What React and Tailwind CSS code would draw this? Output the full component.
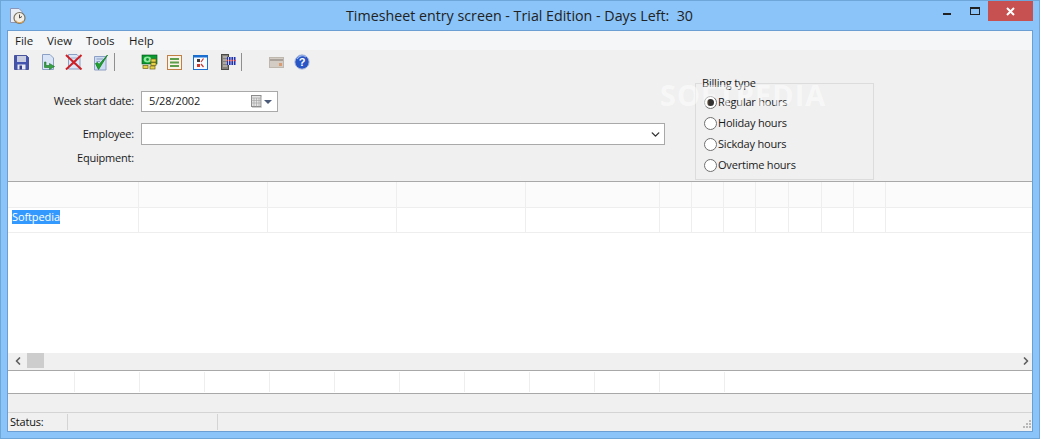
import { ChevronDown, ChevronLeft, ChevronRight } from 'lucide-react'

const gridCols = ['w-[131px]', 'w-[129px]', 'w-[129px]', 'w-[129px]', 'w-[134px]', 'w-[32px]', 'w-[32px]', 'w-[32px]', 'w-[33px]', 'w-[33px]', 'w-[32px]', 'w-[32px]']
const footCols = [67, 65, 65, 65, 65, 65, 65, 65, 65, 65, 65]

function AppIcon() {
  return (
    <svg width="18" height="18" viewBox="0 0 18 18" aria-hidden="true">
      <path d="M1.5 1.5H10L13 4.5V15.5H1.5Z" fill="#e8edf6" stroke="#8b97b8" />
      <circle cx="10.5" cy="11" r="5.5" fill="#f3efe6" stroke="#77705f" strokeWidth="1.2" />
      <path d="M10.5 11V7.5M10.5 11L13 9.5" stroke="#4c4c4c" strokeWidth="1" />
      <path d="M6.5 13.5A5 5 0 0 0 14.5 14" stroke="#d9a45b" strokeWidth="1.2" fill="none" />
    </svg>
  )
}

function SaveIcon() {
  return (
    <svg width="15" height="15" viewBox="0 0 15 15" aria-hidden="true">
      <path d="M.5 .5H12.5L14.5 2.5V14.5H.5Z" fill="#4254ad" stroke="#333f8e" strokeWidth="0.8" />
      <rect x="3" y="1" width="9" height="6" fill="#c9cde0" />
      <rect x="3.5" y="9.5" width="8" height="5" fill="#e9ebf3" />
      <rect x="5.5" y="10.5" width="2.5" height="4" fill="#333f8e" />
    </svg>
  )
}

function OpenIcon() {
  return (
    <svg width="15" height="16" viewBox="0 0 15 16" aria-hidden="true">
      <path d="M1.5 .5H9L12.5 4V15.5H1.5Z" fill="#d9e5f6" stroke="#8ba0c4" />
      <path d="M5 8V11.5H8.5V9.5L13.5 12.5L8.5 15.5V13.5H3.5V8Z" fill="#35a142" stroke="#1c6e2a" strokeWidth="0.6" />
    </svg>
  )
}

function DeleteIcon() {
  return (
    <svg width="18" height="16" viewBox="0 0 18 16" aria-hidden="true">
      <path d="M3.5 .5H12L15 3.5V15H3.5Z" fill="#dbe6f6" stroke="#8ba0c4" />
      <path d="M6 4H12M6 7H12M6 10H12" stroke="#9fb0cc" />
      <path d="M1 1L16.5 15.5M16.5 1L1 15.5" stroke="#cf1f24" strokeWidth="2" />
    </svg>
  )
}

function CheckIcon() {
  return (
    <svg width="15" height="17" viewBox="0 0 15 17" aria-hidden="true">
      <path d="M1.5 2.5H13V16H1.5Z" fill="#cddcf2" stroke="#8ba0c4" />
      <path d="M3.5 5H10M3.5 7.5H7" stroke="#8ba0c4" />
      <path d="M2.5 9.5L5.5 15.5L14.5 1L6 10.5L4.5 8.5Z" fill="#1fa52e" stroke="#0f7c1e" strokeWidth="0.8" />
    </svg>
  )
}

function MoneyIcon() {
  return (
    <svg width="17" height="16" viewBox="0 0 17 16" aria-hidden="true">
      <rect x="1" y="1" width="15" height="9" fill="#0a9a30" stroke="#06501a" strokeWidth="0.6" />
      <ellipse cx="6.5" cy="5.5" rx="3.8" ry="3" fill="#8fe89e" />
      <circle cx="6.5" cy="5.5" r="1.4" fill="#0a9a30" />
      <rect x="10" y="5" width="5" height="3" fill="#e7d34a" stroke="#6f6110" strokeWidth="0.7" />
      <rect x="10" y="8.5" width="5" height="3" fill="#e7d34a" stroke="#6f6110" strokeWidth="0.7" />
      <rect x="2" y="11.5" width="5" height="3" fill="#e7d34a" stroke="#6f6110" strokeWidth="0.7" />
      <rect x="9" y="12" width="5" height="3" fill="#e7d34a" stroke="#6f6110" strokeWidth="0.7" />
    </svg>
  )
}

function ListIcon() {
  return (
    <svg width="15" height="15" viewBox="0 0 15 15" aria-hidden="true">
      <rect x=".5" y=".5" width="14" height="14" fill="#fbf3e8" stroke="#c07f45" />
      <rect x="3" y="3" width="9" height="2" fill="#5d9e4a" />
      <rect x="3" y="6.5" width="9" height="2" fill="#5d9e4a" />
      <rect x="3" y="10" width="9" height="2" fill="#5d9e4a" />
    </svg>
  )
}

function ChecklistIcon() {
  return (
    <svg width="15" height="15" viewBox="0 0 15 15" aria-hidden="true">
      <rect x=".5" y=".5" width="14" height="14" fill="#f8fbff" stroke="#1a6fd0" />
      <rect x=".5" y=".5" width="14" height="2" fill="#1a6fd0" />
      <rect x="4" y="4" width="3" height="3" fill="#3a3a3a" />
      <rect x="4" y="9" width="3" height="3" fill="#c9392c" />
      <path d="M8 7L10.5 3.5M8 9L10.5 12" stroke="#c9392c" strokeWidth="1.2" />
    </svg>
  )
}

function FilmIcon() {
  return (
    <svg width="15" height="16" viewBox="0 0 15 16" aria-hidden="true">
      <rect x=".5" y=".5" width="7" height="15" fill="#84807a" stroke="#4c4a46" />
      <path d="M2 3H6M2 6H6M2 9H6M2 12H6" stroke="#d7d4cc" />
      <rect x="6" y="3" width="8.5" height="8" fill="#1c2fb0" />
      <path d="M6 6.5H14.5" stroke="#e03a3a" strokeWidth="1.4" />
      <path d="M7.5 3V11M10 3V11M12.5 3V11" stroke="#e8ecff" strokeWidth="0.8" />
    </svg>
  )
}

function CardIcon() {
  return (
    <svg width="15" height="11" viewBox="0 0 15 11" aria-hidden="true">
      <rect x=".5" y=".5" width="14" height="10" fill="#d2ccc4" stroke="#bdb7ae" />
      <rect x="1" y="2" width="13" height="2" fill="#a9a29a" />
      <rect x="10" y="6" width="3" height="3" fill="#d99c72" />
    </svg>
  )
}

function HelpIcon() {
  return (
    <svg width="16" height="16" viewBox="0 0 16 16" aria-hidden="true">
      <circle cx="8" cy="8" r="7.2" fill="#2a55c4" stroke="#b7c3dd" strokeWidth="1" />
      <path d="M3 5A6 6 0 0 1 12 3" stroke="#9db7f0" strokeWidth="1.2" fill="none" />
      <text x="8" y="12" textAnchor="middle" fontSize="11" fontWeight="700" fill="#fff" fontFamily="'Liberation Sans', sans-serif">?</text>
    </svg>
  )
}

function CalendarIcon() {
  return (
    <svg width="12" height="13" viewBox="0 0 12 13" aria-hidden="true">
      <rect x="1.5" y=".5" width="9.5" height="11" fill="#e4e4e4" stroke="#8c8c8c" />
      <path d="M1.5 3H11M1.5 5.5H11M1.5 8H11M4 3V11.5M6.5 3V11.5M9 3V11.5" stroke="#a8a8a8" strokeWidth="0.7" />
      <path d="M2 12.5H11.5V2" stroke="#cfcfcf" fill="none" />
    </svg>
  )
}

function Radio({ label, checked }) {
  return (
    <label className="flex h-[21px] items-center">
      <span className="flex h-[13px] w-[13px] items-center justify-center rounded-full border border-[#707070] bg-white">
        {checked && <span className="h-[7px] w-[7px] rounded-full bg-[#333]" />}
      </span>
      <span className="ml-[1px] text-[11px] tracking-[-0.2px] text-[#1a1a1a]">{label}</span>
    </label>
  )
}

function FormLabel({ children }) {
  return <div className="w-[127px] pr-[1px] text-right text-[11px] tracking-[-0.2px] text-[#1a1a1a]">{children}</div>
}

export default function App() {
  return (
    <div className="relative flex h-[439px] w-[1040px] flex-col overflow-hidden border border-[#6fa6da] bg-[#8ac4f9] font-['Open_Sans',sans-serif]">
      <header className="flex h-[29px] shrink-0 items-center">
        <span className="ml-[8px] mt-[1px]"><AppIcon /></span>
        <div className="mt-[1px] ml-[319px] w-[360px] whitespace-nowrap text-[14.25px] text-[#222]">Timesheet entry screen - Trial Edition - Days Left:&nbsp; 30</div>
        <div className="ml-auto flex h-[20px] items-start self-start">
          <div className="flex h-[20px] w-[29px] items-center justify-center">
            <span className="mt-[6px] block h-[2px] w-[8px] bg-[#222]" />
          </div>
          <div className="flex h-[20px] w-[27px] items-center justify-center">
            <span className="block h-[8px] w-[10px] border border-t-2 border-[#222]" />
          </div>
          <div className="mr-[6px] flex h-[20px] w-[45px] items-center justify-center bg-[#c75050]">
            <svg width="9" height="9" viewBox="0 0 9 9" aria-hidden="true">
              <path d="M1 1L8 8M8 1L1 8" stroke="#fff" strokeWidth="2" />
            </svg>
          </div>
        </div>
      </header>

      <main className="mx-[6px] flex h-[402px] flex-col border border-[#6b9fd4] bg-[#f0f0f0]">
        <nav className="flex h-[19px] shrink-0 items-center bg-[#f5f6f7] pl-[7px] text-[11.5px] text-[#1a1a1a]">
          <span className="w-[32px]">File</span>
          <span className="w-[39px]">View</span>
          <span className="w-[43px]">Tools</span>
          <span>Help</span>
        </nav>

        <div className="flex h-[24px] shrink-0 items-center pl-[6px]">
          <span className="w-[27px]"><SaveIcon /></span>
          <span className="w-[24px]"><OpenIcon /></span>
          <span className="w-[28px]"><DeleteIcon /></span>
          <span className="w-[21px]"><CheckIcon /></span>
          <span className="h-[18px] w-[1px] bg-[#8f8f8f]" />
          <span className="ml-[26px] w-[26px]"><MoneyIcon /></span>
          <span className="w-[26px]"><ListIcon /></span>
          <span className="w-[28px]"><ChecklistIcon /></span>
          <span className="w-[20px]"><FilmIcon /></span>
          <span className="h-[18px] w-[1px] bg-[#8f8f8f]" />
          <span className="ml-[27px] w-[25px]"><CardIcon /></span>
          <span><HelpIcon /></span>
        </div>

        <section className="flex h-[107px] shrink-0">
          <div className="w-[657px] shrink-0">
            <div className="mt-[17px] flex h-[21px] items-center">
              <FormLabel>Week start date:</FormLabel>
              <div className="ml-[6px] flex h-[21px] w-[137px] items-center border border-[#a9a9a9] bg-white pl-[7px] text-[11px] tracking-[-0.1px] text-[#1a1a1a]">
                5/28/2002
                <span className="ml-auto flex items-center pr-[5px]">
                  <CalendarIcon />
                  <span className="ml-[2px] h-0 w-0 border-x-[4px] border-t-[4px] border-x-transparent border-t-[#4a5a78]" />
                </span>
              </div>
            </div>
            <div className="mt-[11px] flex h-[22px] items-center">
              <FormLabel>Employee:</FormLabel>
              <div className="ml-[6px] flex h-[22px] w-[524px] items-center justify-end border border-[#a9a9a9] bg-white pr-[2px]">
                <ChevronDown size={13} strokeWidth={2.6} color="#333" />
              </div>
            </div>
            <div className="mt-[6px] flex h-[14px] items-center">
              <FormLabel>Equipment:</FormLabel>
            </div>
          </div>
          <fieldset className="mt-[2px] ml-[30px] h-[104px] w-[179px] border border-[#dcdcdc] pl-[8px]">
            <legend className="ml-[-2px] text-[11px] leading-[14px] tracking-[-0.2px] text-[#1a1a1a]">Billing type</legend>
            <div className="mt-[2px]">
              <Radio label="Regular hours" checked />
              <Radio label="Holiday hours" />
              <Radio label="Sickday hours" />
              <Radio label="Overtime hours" />
            </div>
          </fieldset>
        </section>

        <div className="flex h-[190px] shrink-0 flex-col border-y border-[#a8a8a8] bg-white">
          <div className="flex h-[26px] shrink-0 border-b border-[#eeeeee] bg-[#fbfbfb]">
            {gridCols.map((w, i) => <div key={i} className={`${w} shrink-0 border-r border-[#eeeeee]`} />)}
          </div>
          <div className="flex h-[25px] shrink-0 border-b border-[#eeeeee]">
            {gridCols.map((w, i) => (
              <div key={i} className={`${w} flex shrink-0 items-start border-r border-[#eeeeee] pl-[4px] pt-[2px]`}>
                {i === 0 && <span className="h-[14px] bg-[#3399ff] text-[11px] leading-[14px] tracking-[-0.1px] text-white">Softpedia</span>}
              </div>
            ))}
          </div>
          <div className="flex-1" />
          <div className="flex h-[17px] shrink-0 items-start bg-[#f0f0f0]">
            <span className="flex h-[15px] w-[19px] items-center justify-center"><ChevronLeft size={12} strokeWidth={3.5} color="#606060" /></span>
            <span className="h-[15px] w-[17px] bg-[#cdcdcd]" />
            <span className="ml-auto flex h-[15px] w-[13px] items-center justify-center"><ChevronRight size={12} strokeWidth={3.5} color="#606060" /></span>
          </div>
        </div>

        <div className="flex h-[23px] shrink-0 border-b border-[#a8a8a8] bg-white">
          {footCols.map((w, i) => (
            <div key={i} className="my-[1px] shrink-0 border-r border-[#eeeeee]" style={{ width: w }} />
          ))}
        </div>

        <div className="h-[19px] shrink-0 border-b border-[#d4d4d4]" />

        <footer className="relative flex h-[18px] shrink-0 items-center text-[11px] tracking-[-0.2px] text-[#111]">
          <div className="flex h-[16px] w-[60px] items-center border-r border-[#d4d4d4] pl-[2px]">Status:</div>
          <div className="h-[16px] w-[150px] border-r border-[#d4d4d4]" />
          <svg className="absolute bottom-[2px] right-[1px]" width="9" height="9" viewBox="0 0 9 9" aria-hidden="true">
            <path d="M7 0h2v2H7zM4 3h2v2H4zM7 3h2v2H7zM1 6h2v2H1zM4 6h2v2H4zM7 6h2v2H7z" fill="#b8b8b8" />
          </svg>
        </footer>
      </main>

      {/* site watermark over the form */}
      <div className="absolute left-[659px] top-[72px] text-[29px] font-bold tracking-[1px] text-white/50">SOFTPEDIA</div>
    </div>
  )
}
